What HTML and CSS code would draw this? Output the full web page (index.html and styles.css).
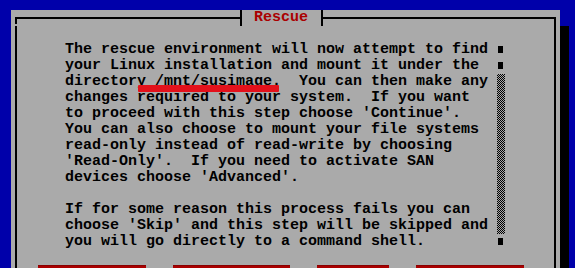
FILE: index.html
```html
<!DOCTYPE html>
<html>
<head>
<meta charset="utf-8">
<link rel="stylesheet" href="styles.css">
</head>
<body>
<div class="screen">
  <div class="dialog">
    <div class="topbar">
      <span class="seg seg-left"></span>
      <span class="title">Rescue</span>
      <span class="seg seg-right"></span>
    </div>
    <div class="frame">
      <div class="content">
        <div class="text">
          <div class="line">The rescue environment will now attempt to find</div>
          <div class="line">your Linux installation and mount it under the</div>
          <div class="line">directory /mnt/susimage.  You can then make any</div>
          <div class="line">changes required to your system.  If you want</div>
          <div class="line">to proceed with this step choose 'Continue'.</div>
          <div class="line">You can also choose to mount your file systems</div>
          <div class="line">read-only instead of read-write by choosing</div>
          <div class="line">'Read-Only'.  If you need to activate SAN</div>
          <div class="line">devices choose 'Advanced'.</div>
          <div class="line"> </div>
          <div class="line">If for some reason this process fails you can</div>
          <div class="line">choose 'Skip' and this step will be skipped and</div>
          <div class="line">you will go directly to a command shell.</div>
        </div>
        <div class="scrollbar">
          <span class="sb-cell sb-mark"></span>
          <span class="sb-cell sb-mark"></span>
          <span class="sb-track"></span>
          <span class="sb-cell sb-mark"></span>
        </div>
      </div>
      <div class="buttons">
        <span class="btn btn-12"></span>
        <span class="btn btn-13"></span>
        <span class="btn btn-8"></span>
        <span class="btn btn-12"></span>
      </div>
    </div>
  </div>
  <div class="annotation"></div>
</div>
</body>
</html>
```

FILE: styles.css
```css
html, body {
  margin: 0;
  padding: 0;
  background: #0000aa;
  overflow: hidden;
  width: 575px;
  height: 268px;
}

.screen {
  position: relative;
  height: 268px;
  overflow: hidden;
  padding: 10px 0 0 11px;
  box-sizing: border-box;
  font-family: "Liberation Mono", "DejaVu Sans Mono", monospace;
  font-weight: bold;
  font-size: 15px;
  line-height: 16px;
  color: #000;
}

.dialog {
  width: 549px;
  height: 258px;
  box-sizing: border-box;
  padding: 0 4px;
  background: #aaaaaa;
  box-shadow: 9px 16px 0 #000;
  overflow: hidden;
}

.topbar {
  display: flex;
  height: 16px;
}

.seg {
  display: block;
  height: 7px;
  margin-top: 7px;
  border-top: 2px solid #000;
}

.seg-left {
  width: 225px;
  box-sizing: border-box;
  border-left: 2px solid #000;
  flex: none;
}

.seg-right {
  flex: 1;
  border-right: 2px solid #000;
}

.title {
  display: block;
  flex: none;
  width: 83px;
  height: 16px;
  box-sizing: border-box;
  border-left: 2px solid #000;
  border-right: 2px solid #000;
  padding-left: 12px;
  color: #aa0000;
  white-space: pre;
}

.frame {
  border-left: 2px solid #000;
  border-right: 2px solid #000;
  padding-top: 16px;
  height: 242px;
  box-sizing: border-box;
}

.content {
  display: grid;
  grid-template-columns: 432px 9px;
  padding-left: 48px;
}

.line {
  height: 16px;
  white-space: pre;
}

.scrollbar {
  display: flex;
  flex-direction: column;
}

.sb-cell {
  display: block;
  height: 16px;
}

.sb-mark::before {
  content: "";
  display: block;
  width: 5px;
  height: 7px;
  margin: 4px 0 0 1px;
  background: #000;
}

.sb-track {
  display: block;
  width: 8px;
  height: 160px;
  background: repeating-conic-gradient(#000 0 25%, #aaaaaa 0 50%) 0 0 / 2px 2px;
}

.buttons {
  display: flex;
  gap: 27px;
  margin-top: 15px;
  padding-left: 21px;
}

.btn {
  display: block;
  height: 3px;
  background: #aa0000;
  border-top: 1px solid #880000;
}

.btn-12 { width: 108px; }
.btn-13 { width: 117px; }
.btn-8 { width: 72px; }

.annotation {
  position: absolute;
  left: 138px;
  top: 85px;
  width: 141px;
  height: 7px;
  background: #e3111b;
  border-radius: 1px;
}
```
